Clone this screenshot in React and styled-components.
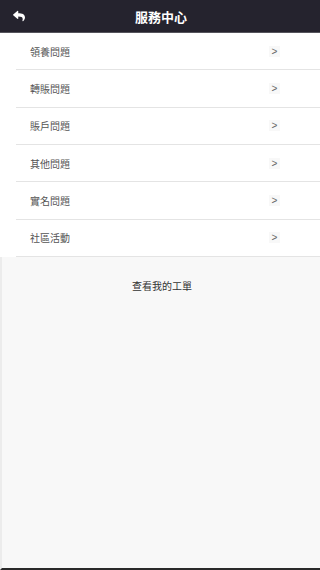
import React from 'react';
import styled, { createGlobalStyle } from 'styled-components';
import { FaReply } from 'react-icons/fa';

const GlobalStyle = createGlobalStyle`
  html, body {
    margin: 0;
    padding: 0;
    background: #f8f8f8;
    font-family: "Noto Sans CJK TC", "Noto Sans", sans-serif;
  }
`;

const Page = styled.div`
  min-height: 570px;
  box-sizing: border-box;
  background: #f8f8f8;
  border-left: 2px solid #ececec;
  border-bottom: 2px solid #2a2a2a;
  display: flex;
  flex-direction: column;
`;

const Header = styled.div`
  height: 33px;
  box-sizing: border-box;
  background: #25232e;
  border-bottom: 1px solid #55545c;
  margin-left: -2px;
  display: flex;
  align-items: center;
  justify-content: center;
  position: relative;
`;

const BackButton = styled.button`
  position: absolute;
  left: 13px;
  top: 10px;
  border: none;
  background: transparent;
  padding: 0;
  color: #fff;
  display: flex;
  font-size: 12px;
`;

const Title = styled.h1`
  margin: 0 0 0 2px;
  color: #fff;
  font-size: 13px;
  font-weight: 700;
`;

const List = styled.ul`
  list-style: none;
  margin: 0 0 0 -2px;
  padding: 0;
  background: #fff;
`;

const Item = styled.li`
  height: 37.33px;
  box-sizing: border-box;
  margin-left: 16px;
  padding: 0 40px 0 14px;
  border-bottom: 1px solid #e4e4e4;
  display: flex;
  align-items: center;
  justify-content: space-between;
  font-size: 10px;
  color: #555;
`;

const Chevron = styled.span`
  background: #f8f8f8;
  color: #666;
  font-family: "Liberation Sans", sans-serif;
  font-size: 10px;
  width: 11px;
  height: 11px;
  display: flex;
  align-items: center;
  justify-content: center;
`;

const TicketLink = styled.a`
  display: block;
  text-align: center;
  font-size: 10px;
  color: #333;
  margin-top: 21px;
  margin-left: 2px;
  text-decoration: none;
`;

const items = ['領養問題', '轉賬問題', '賬戶問題', '其他問題', '實名問題', '社區活動'];

export default function App() {
  return (
    <Page>
      <GlobalStyle />
      <Header>
        <BackButton aria-label="back">
          <FaReply />
        </BackButton>
        <Title>服務中心</Title>
      </Header>
      <List>
        {items.map(label => (
          <Item key={label}>
            <span>{label}</span>
            <Chevron>&gt;</Chevron>
          </Item>
        ))}
      </List>
      <TicketLink href="#">查看我的工單</TicketLink>
    </Page>
  );
}
